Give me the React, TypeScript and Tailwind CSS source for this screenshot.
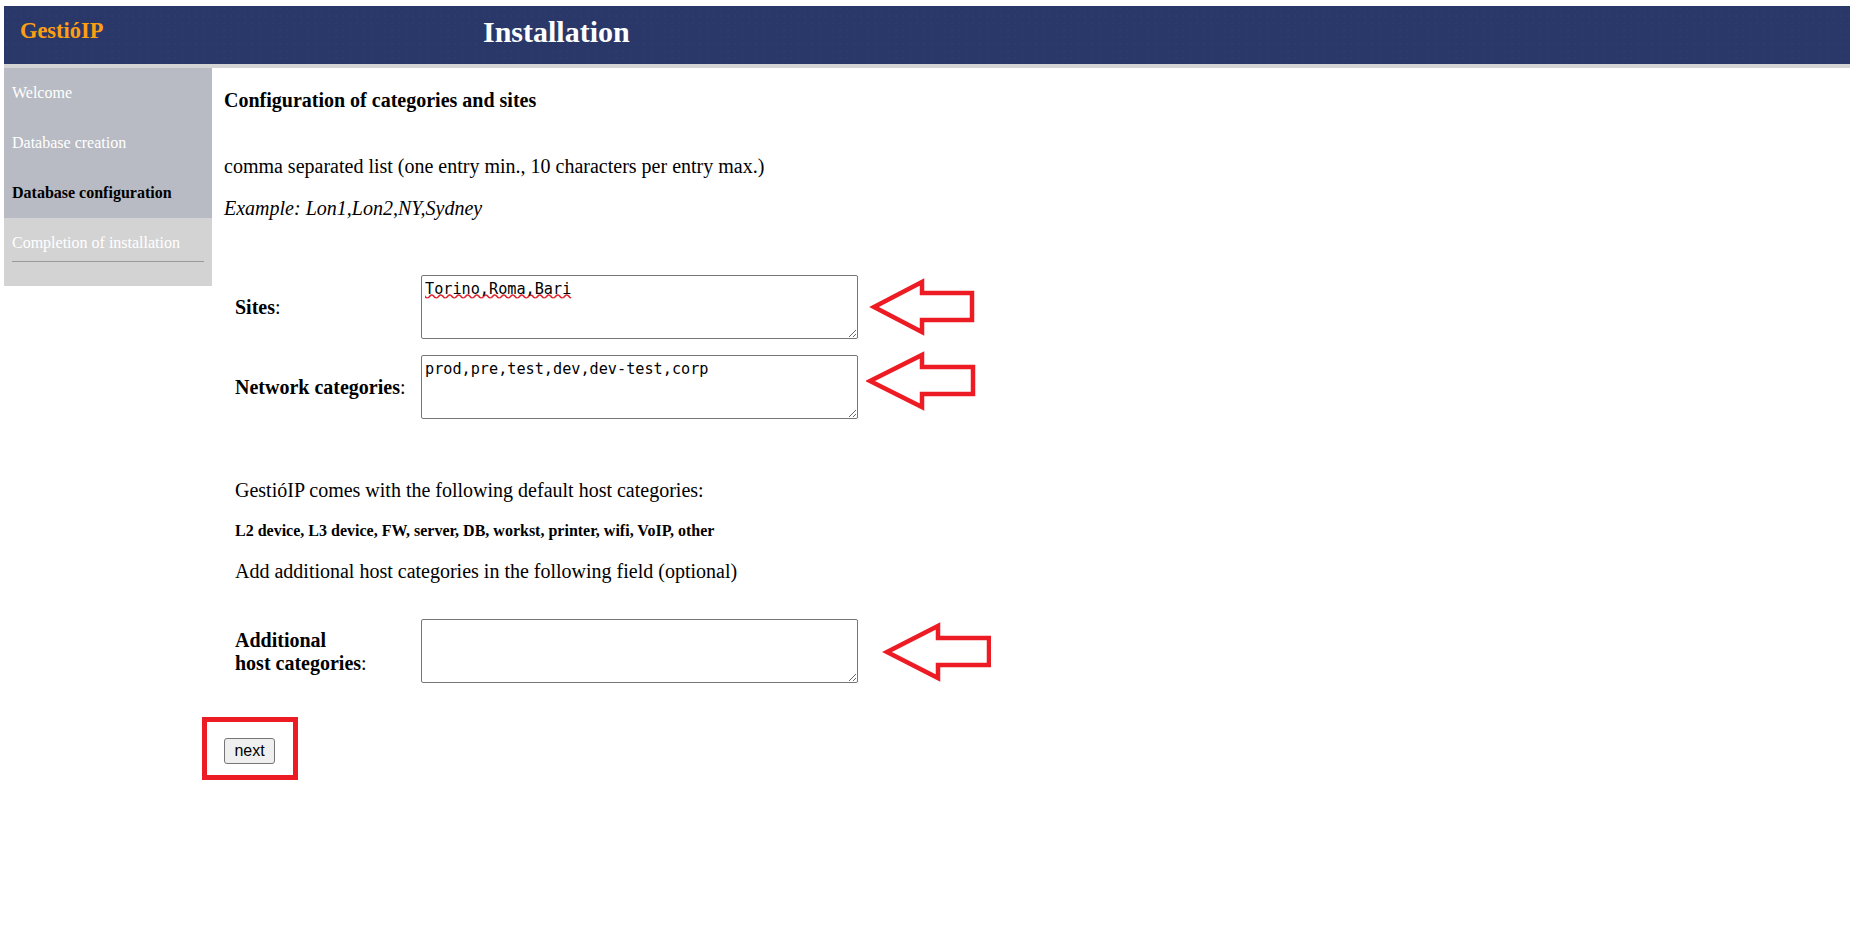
const serif = "font-['Liberation_Serif',serif]";

function Arrow({ className, points }: { className: string; points: string }) {
  return (
    <svg className={className} viewBox="0 0 110 60" fill="none">
      <polygon points={points} stroke="#ed1c24" strokeWidth="4.5" strokeLinejoin="miter" fill="none" />
    </svg>
  );
}

function Field({ label, value, squiggle }: { label: React.ReactNode; value: string; squiggle?: boolean }) {
  return (
    <div className="flex items-center">
      <div className="w-[197px] pl-[11px] pt-[1px] text-[20px] leading-[23px]">{label}</div>
      <textarea
        readOnly
        spellCheck={false}
        value={value}
        className={`w-[437px] h-[64px] px-[3px] pt-[3px] pb-[1px] border border-[#767676] rounded-[2px] bg-white text-black text-[15.2px] leading-[20px] font-['DejaVu_Sans_Mono',monospace] outline-none resize ${squiggle ? "underline decoration-wavy decoration-[#e0242c] underline-offset-[-1px] [text-decoration-skip-ink:none]" : ""}`}
      />
    </div>
  );
}

export default function App() {
  return (
    <div className={`relative min-h-[933px] bg-white text-black ${serif}`}>
      <div className="pt-[6px] pl-[4px] pr-[4px]">
        <header className="flex items-center h-[62px] pb-[4px] border-b-[4px] border-[#d4d4d4] bg-[#2a3869] bg-[radial-gradient(#2d3b6e_1px,transparent_1px)] bg-[length:7px_7px]">
          <div className="w-[479px] pl-[16px] pb-[5px] text-[#fd9f13] text-[22.4px] font-bold leading-[28px]">GestióIP</div>
          <h1 className="pb-[3px] text-white text-[30px] font-bold leading-[36px]">Installation</h1>
        </header>

        <div className="flex items-start">
          <nav className="w-[208px] shrink-0 text-[16px] leading-[20px]">
            <div className="bg-[#b8bbc3]">
              <div className="h-[50px] flex items-center pl-[8px] text-white">Welcome</div>
              <div className="h-[50px] flex items-center pl-[8px] text-white">Database creation</div>
              <div className="h-[50px] flex items-center pl-[8px] font-bold text-black">Database configuration</div>
            </div>
            <div className="h-[68px] bg-[#d3d3d3] px-[8px] pt-[15px] text-white">
              <div className="pb-[8px] border-b border-[#9a9a9a] whitespace-nowrap">Completion of installation</div>
            </div>
          </nav>

          <main className="pl-[12px] pt-[20px] text-[20px] leading-[24px]">
            <h2 className="font-bold text-[20px]">Configuration of categories and sites</h2>
            <p className="mt-[42px]">comma separated list (one entry min., 10 characters per entry max.)</p>
            <p className="mt-[18px] italic">Example: Lon1,Lon2,NY,Sydney</p>

            <div className="mt-[55px] flex flex-col gap-[16px]">
              <Field label={<><b>Sites</b>:</>} value="Torino,Roma,Bari" squiggle />
              <Field label={<><b>Network categories</b>:</>} value="prod,pre,test,dev,dev-test,corp" />
            </div>

            <div className="pl-[11px]">
              <p className="mt-[59px]">GestióIP comes with the following default host categories:</p>
              <p className="mt-[17px] font-bold text-[16px]">L2 device, L3 device, FW, server, DB, workst, printer, wifi, VoIP, other</p>
              <p className="mt-[16px]">Add additional host categories in the following field (optional)</p>
            </div>

            <div className="mt-[36px]">
              <Field label={<><b>Additional<br />host categories</b>:</>} value="" />
            </div>

            <button className="mt-[55px] block w-[51px] h-[26px] bg-[#efefef] border border-[#767676] rounded-[3px] font-['Liberation_Sans',sans-serif] text-[16px] leading-[20px] text-black">
              next
            </button>
          </main>
        </div>
      </div>

      <Arrow className="absolute left-[866px] top-[277px] w-[110px] h-[60px]" points="8,30 56,5 56,16 106,16 106,43 56,43 56,55" />
      <Arrow className="absolute left-[866px] top-[351px] w-[110px] h-[60px]" points="4,30 56,4 56,16 107,16 107,43 56,43 56,56" />
      <Arrow className="absolute left-[881px] top-[622px] w-[110px] h-[60px]" points="6,30 57,4 57,16 108,16 108,43 57,43 57,56" />
      <div className="absolute left-[202px] top-[717px] w-[96px] h-[63px] border-[5px] border-[#ed1c24]" />
    </div>
  );
}
